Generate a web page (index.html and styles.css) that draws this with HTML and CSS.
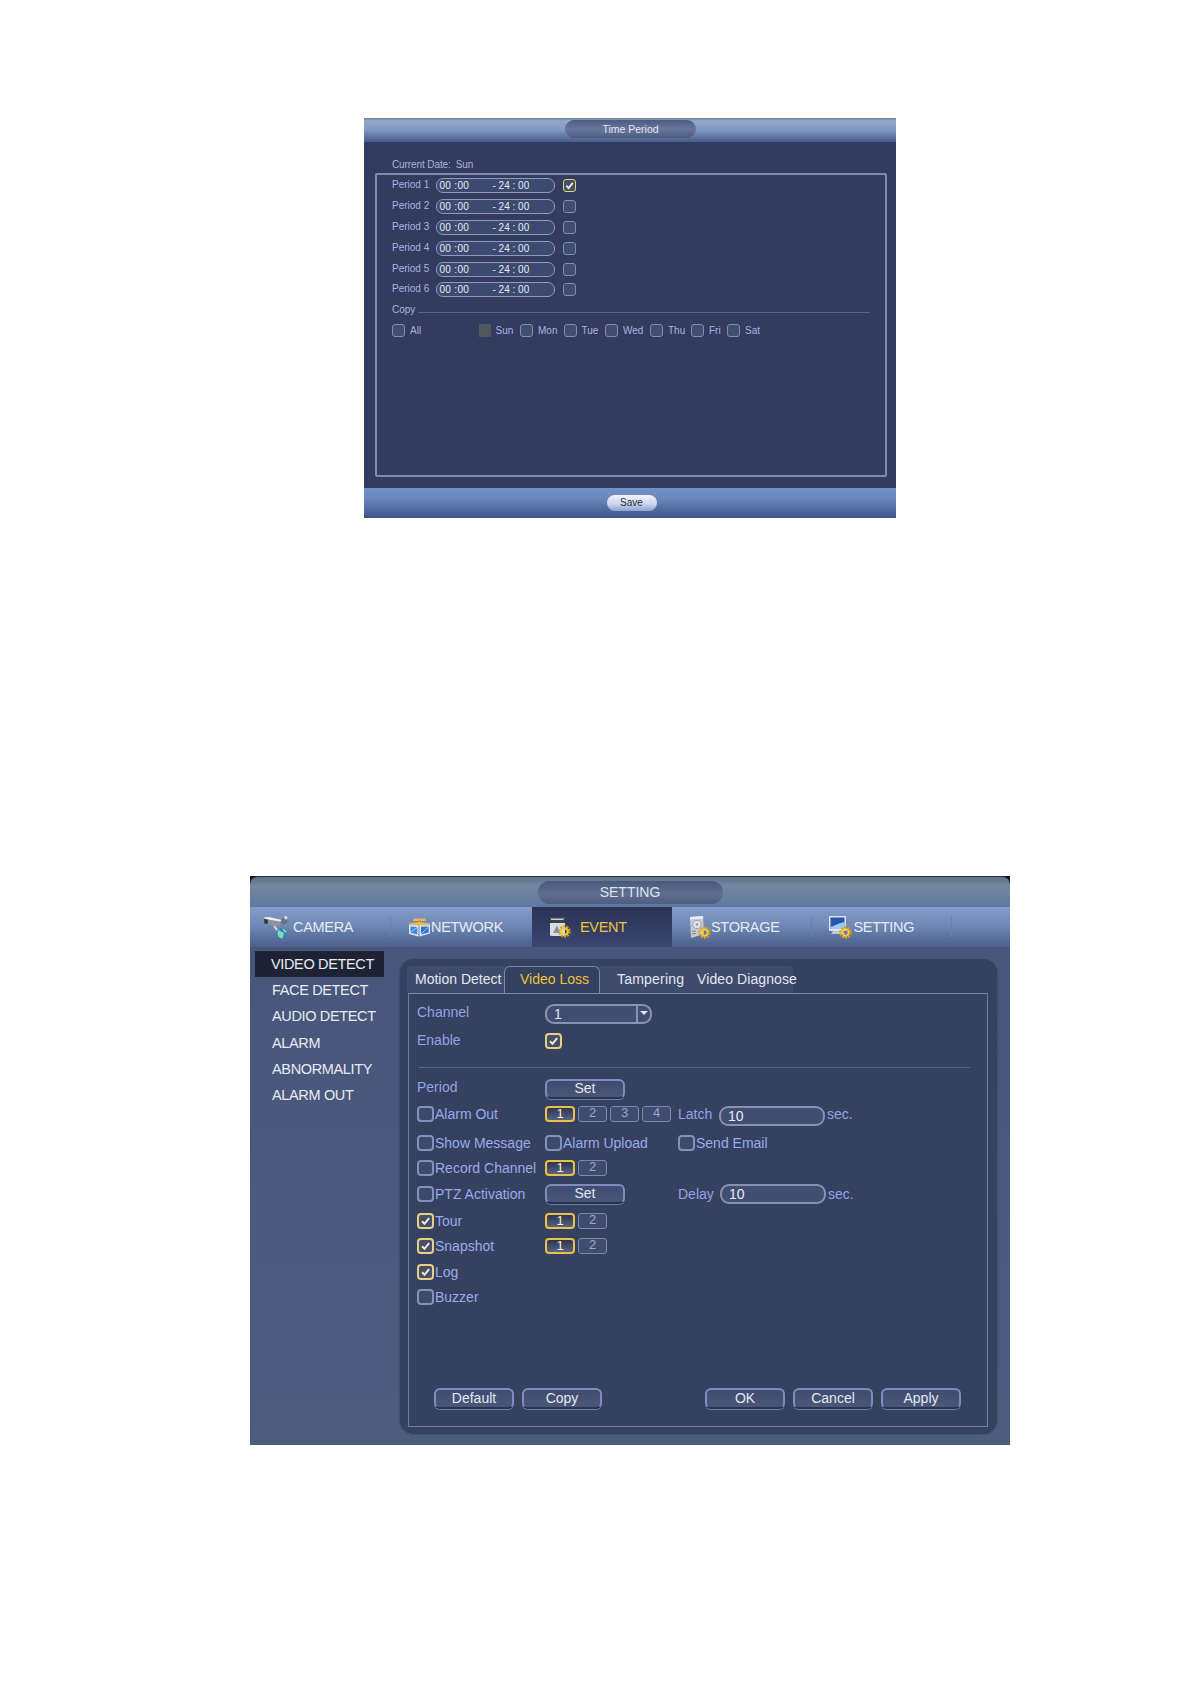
FILE: index.html
```html
<!DOCTYPE html>
<html lang="en">
<head>
<meta charset="utf-8">
<title>Time Period and Video Loss settings</title>
<link rel="stylesheet" href="styles.css">
</head>
<body>
<section class="period-win">
  <header class="pw-head"><div class="pw-pill">Time Period</div></header>
  <div class="pw-body">
    <div class="pw-date"><span>Current Date:</span><span>Sun</span></div>
    <div class="pw-box">
      <div class="pw-row"><span class="pw-label">Period 1</span><div class="pw-input"><span>00 :00</span><span>- 24 : 00</span></div><span class="cb sm on"><svg viewBox="0 0 12 12"><path d="M2.500 6.200 5 8.800 9.600 3.200"/></svg></span></div>
      <div class="pw-row"><span class="pw-label">Period 2</span><div class="pw-input"><span>00 :00</span><span>- 24 : 00</span></div><span class="cb sm"></span></div>
      <div class="pw-row"><span class="pw-label">Period 3</span><div class="pw-input"><span>00 :00</span><span>- 24 : 00</span></div><span class="cb sm"></span></div>
      <div class="pw-row"><span class="pw-label">Period 4</span><div class="pw-input"><span>00 :00</span><span>- 24 : 00</span></div><span class="cb sm"></span></div>
      <div class="pw-row"><span class="pw-label">Period 5</span><div class="pw-input"><span>00 :00</span><span>- 24 : 00</span></div><span class="cb sm"></span></div>
      <div class="pw-row"><span class="pw-label">Period 6</span><div class="pw-input"><span>00 :00</span><span>- 24 : 00</span></div><span class="cb sm"></span></div>
      <div class="pw-copy"><span>Copy</span><i></i></div>
      <div class="pw-days">
        <span class="day"><span class="cb sm"></span>All</span>
        <span class="day"><span class="cb sm off"></span>Sun</span>
        <span class="day"><span class="cb sm"></span>Mon</span>
        <span class="day"><span class="cb sm"></span>Tue</span>
        <span class="day"><span class="cb sm"></span>Wed</span>
        <span class="day"><span class="cb sm"></span>Thu</span>
        <span class="day"><span class="cb sm"></span>Fri</span>
        <span class="day"><span class="cb sm"></span>Sat</span>
      </div>
    </div>
  </div>
  <footer class="pw-foot"><button class="pw-save">Save</button></footer>
</section>

<section class="set-win">
  <header class="sw-title"><div class="sw-pill">SETTING</div></header>
  <nav class="sw-tabs">
    <div class="tab t-camera">
      <svg class="ico" width="25" height="26" viewBox="0 0 25 26"><path d="M1 4 17 7 16 13 3 10Z" fill="#8d929c"/><path d="M1 3.500 6 3 19 6 17 7.500 2 5Z" fill="#eceef2"/><path d="M1 5 5 5.500 4.500 10 1.500 9.500Z" fill="#2f333c"/><path d="M18 5 23 3 24.500 4 24 9 19 11Z" fill="#6c717c"/><path d="M21 2.500 24 2 24.500 5 22 5.500Z" fill="#dfe2e8"/><path d="M11 12 15 17" stroke="#c9ccd3" stroke-width="2.200"/><circle cx="18.500" cy="19.500" r="5.500" fill="#2a86b2"/><path d="M15 16c2 0 2.500 2 4.500 2s1 4 0 6.500c-2.500 0-5-2.500-5-5zM19.500 14.500c2 .5 4 2 4.300 4-2 .5-3.500-1-4.300-4Z" fill="#86d6b4"/></svg>
      <span>CAMERA</span>
    </div>
    <div class="tab t-network">
      <svg class="ico" width="23" height="20" viewBox="0 0 23 20"><path d="M6 1.500h11l1 2.500H5Z" fill="#e8b84a"/><path d="M10.500 3.500h2V7h-2Z" fill="#c98f2c"/><path d="M1 6.500 11 5 22 6.500 22 8 11 9 1 8Z" fill="#eeb84c"/><path d="M1 8 10.500 8.500V19.500L1 17Z" fill="#dfe7f3"/><path d="M2.500 9.500 9.300 10V17.500L2.500 15.800Z" fill="#3d8bdc"/><path d="M11.500 8.500 22 8V16.500L11.500 19.500Z" fill="#dfe7f3"/><path d="M13 9.800 20.700 9.400V15.600L13 17.500Z" fill="#2d74cf"/><path d="M13 17 20.500 10M2.800 15 9 10.500" stroke="#a8d2f5" stroke-width="1"/></svg>
      <span>NETWORK</span>
    </div>
    <div class="tab t-event active">
      <svg class="ico" width="22" height="22" viewBox="0 0 22 22"><rect x="1" y="1" width="15" height="19" rx="1.500" fill="#d8dce4"/><path d="M1 2.500Q1 1 2.500 1H14.500Q16 1 16 2.500V7H1Z" fill="#3f434c"/><path d="M2 3.200H14.500" stroke="#eef0f4" stroke-width="1.200"/><path d="M4 17 8 9.500 11 17Z" fill="#7f90a8"/><circle cx="15.500" cy="15.500" r="5" fill="none" stroke="#d9a010" stroke-width="2.400" stroke-dasharray="2 1.100"/><circle cx="15.500" cy="15.500" r="3.200" fill="none" stroke="#f4cc3a" stroke-width="2"/></svg>
      <span>EVENT</span>
    </div>
    <div class="tab t-storage">
      <svg class="ico" width="22" height="24" viewBox="0 0 22 24"><path d="M1 2 14 1 15 19 2 23Z" fill="#c6cad3"/><path d="M1 2 14 1 14.200 3.500 1 4.500Z" fill="#eceef2"/><circle cx="8" cy="9.500" r="4.200" fill="#dfe2e8" stroke="#9aa1ae"/><circle cx="8" cy="9.500" r="1.300" fill="#8f96a4"/><path d="M3 16.500 7 16M3 19 7 18.500" stroke="#7b818d"/><circle cx="15.500" cy="17.500" r="5" fill="none" stroke="#d9a010" stroke-width="2.400" stroke-dasharray="2 1.100"/><circle cx="15.500" cy="17.500" r="3.200" fill="none" stroke="#f4cc3a" stroke-width="2"/></svg>
      <span>STORAGE</span>
    </div>
    <div class="tab t-setting">
      <svg class="ico" width="24" height="24" viewBox="0 0 24 24"><rect x="1" y="1" width="17" height="15" rx="1" fill="#dfe4ec"/><rect x="2.500" y="2.500" width="14" height="11.500" fill="#2558ac"/><path d="M2.500 12c4-1 8-4 14-5v7h-14Z" fill="#9ccbf2"/><path d="M5 16h9l3 3H3Z" fill="#c3c8d1"/><circle cx="17.500" cy="17.500" r="5" fill="none" stroke="#d9a010" stroke-width="2.400" stroke-dasharray="2 1.100"/><circle cx="17.500" cy="17.500" r="3.200" fill="none" stroke="#f4cc3a" stroke-width="2"/></svg>
      <span>SETTING</span>
    </div>
  </nav>
  <div class="sw-main">
    <aside class="side">
      <div class="side-item sel">VIDEO DETECT</div>
      <div class="side-item">FACE DETECT</div>
      <div class="side-item">AUDIO DETECT</div>
      <div class="side-item">ALARM</div>
      <div class="side-item">ABNORMALITY</div>
      <div class="side-item">ALARM OUT</div>
    </aside>
    <main class="content">
      <div class="subtabs">
        <span class="st st-motion">Motion Detect</span>
        <span class="st st-loss">Video Loss</span>
        <span class="st st-tamper">Tampering</span>
        <span class="st st-diag">Video Diagnose</span>
      </div>
      <div class="box">
        <div class="form">
          <span class="lbl up2">Channel</span>
          <div class="combo"><span>1</span><i class="arrow"></i></div>
          <span></span>

          <span class="lbl up1">Enable</span>
          <span class="cb on"><svg viewBox="0 0 12 12"><path d="M2.500 6.200 5 8.800 9.600 3.200"/></svg></span>
          <span></span>

          <hr class="rule">

          <span class="lbl up2">Period</span>
          <button class="btn set">Set</button>
          <span></span>

          <label class="chk"><span class="cb"></span>Alarm Out</label>
          <div class="nums"><span class="num on">1</span><span class="num">2</span><span class="num">3</span><span class="num">4</span></div>
          <div class="extra"><span class="lbl x-lbl">Latch</span><span class="field"><span>10</span></span><span class="lbl unit">sec.</span></div>

          <label class="chk"><span class="cb"></span>Show Message</label>
          <label class="chk"><span class="cb"></span>Alarm Upload</label>
          <label class="chk"><span class="cb"></span>Send Email</label>

          <label class="chk"><span class="cb"></span>Record Channel</label>
          <div class="nums"><span class="num on">1</span><span class="num">2</span></div>
          <span></span>

          <label class="chk"><span class="cb"></span>PTZ Activation</label>
          <button class="btn set">Set</button>
          <div class="extra"><span class="lbl x-lbl">Delay</span><span class="field f2"><span>10</span></span><span class="lbl unit">sec.</span></div>

          <label class="chk"><span class="cb on"><svg viewBox="0 0 12 12"><path d="M2.500 6.200 5 8.800 9.600 3.200"/></svg></span>Tour</label>
          <div class="nums"><span class="num on">1</span><span class="num">2</span></div>
          <span></span>

          <label class="chk"><span class="cb on"><svg viewBox="0 0 12 12"><path d="M2.500 6.200 5 8.800 9.600 3.200"/></svg></span>Snapshot</label>
          <div class="nums"><span class="num on">1</span><span class="num">2</span></div>
          <span></span>

          <label class="chk"><span class="cb on"><svg viewBox="0 0 12 12"><path d="M2.500 6.200 5 8.800 9.600 3.200"/></svg></span>Log</label>
          <span></span>
          <span></span>

          <label class="chk"><span class="cb"></span>Buzzer</label>
          <span></span>
          <span></span>
        </div>
        <div class="actions">
          <div class="act-group"><button class="btn act">Default</button><button class="btn act">Copy</button></div>
          <div class="act-group"><button class="btn act">OK</button><button class="btn act">Cancel</button><button class="btn act">Apply</button></div>
        </div>
      </div>
    </main>
  </div>
</section>
</body>
</html>
```
FILE: styles.css
```css
* { box-sizing: border-box; }
html, body { margin: 0; padding: 0; background: #fff; }
body {
  width: 1191px;
  height: 1684px;
  overflow: hidden;
  font-family: "Liberation Sans", Arial, sans-serif;
  display: flex;
  flex-direction: column;
}

/* ---------- shared checkbox ---------- */
.cb {
  flex: none;
  display: inline-block;
  width: 17px;
  height: 16px;
  border: 2px solid #8492bb;
  border-radius: 4px;
  background: #3d4a6c;
}
.cb svg { display: block; width: 100%; height: 100%; fill: none; stroke: #f2ead0; stroke-width: 2; }
.cb.on { border-color: #e5d083; background: #454f68; }
.cb.sm { width: 13px; height: 13px; border-width: 1.500px; border-radius: 3px; border-color: #7f8cb4; background: #414e72; }
.cb.sm.on { border-color: #dcd77c; background: #46506c; }
.cb.sm.off { border: 0; border-radius: 0; background: #50555f; width: 12px; }

/* ---------- Time Period window ---------- */
.period-win {
  flex: none;
  width: 532px;
  height: 400px;
  margin: 118px 0 0 364px;
  display: flex;
  flex-direction: column;
  background: #333b5e;
}
.pw-head {
  flex: none;
  height: 24px;
  display: flex;
  justify-content: center;
  padding: 2px 0 0 0;
  background: linear-gradient(#6f8099 0, #93a9cc 12%, #7f98c2 50%, #465c8a 100%);
}
.pw-pill {
  width: 131px;
  height: 18px;
  margin-left: 1px;
  border-radius: 9px;
  background: linear-gradient(#4e5c80, #67779b 50%, #4d5b80);
  color: #e3e7f2;
  font-size: 10.500px;
  line-height: 18px;
  text-align: center;
}
.pw-body { flex: 1; padding: 0 9px 0 11px; display: flex; flex-direction: column; }
.pw-date {
  height: 31px;
  padding: 16px 0 0 17px;
  display: flex;
  gap: 5px;
  font-size: 10px;
  letter-spacing: -.1px;
  line-height: 14px;
  color: #a9b5dc;
}
.pw-box {
  height: 304px;
  border: 2px solid #7f8ab3;
  border-radius: 2px;
  padding: .500px 0 0 15px;
}
.pw-row { height: 20.800px; display: flex; align-items: center; }
.pw-label { width: 44px; font-size: 10px; color: #a7b5e4; margin-bottom: 2px; }
.pw-input {
  width: 119px;
  height: 15px;
  display: flex;
  padding: 0 0 0 2.500px;
  border: 1.500px solid #8d99bf;
  border-radius: 7px;
  background: #3d4a70;
  color: #e8ebf4;
  font-size: 10px;
  line-height: 13px;
}
.pw-input span:first-child { width: 53px; letter-spacing: .3px; }
.pw-row .cb { margin-left: 8px; }
.pw-copy { height: 19px; display: flex; align-items: center; gap: 3px; font-size: 10px; color: #a7b5e4; padding-right: 15px; }
.pw-copy i { flex: 1; height: 1px; background: #59648a; margin-top: 6px; }
.pw-days {
  display: grid;
  grid-template-columns: 86.500px 41.500px 43.500px 41.500px 45px 41px 36px auto;
  margin-top: 5px;
}
.day { display: flex; align-items: center; gap: 5px; font-size: 10px; color: #a7b5e4; }
.pw-foot {
  flex: none;
  height: 30px;
  display: flex;
  justify-content: center;
  padding-top: 7px;
  background: linear-gradient(#7491c5, #6a86bb 35%, #3c5488);
}
.pw-save {
  width: 50px;
  height: 16px;
  margin-left: 3px;
  padding: 0;
  border: 0;
  border-radius: 8px;
  background: linear-gradient(#f2f5fa, #cdd8ec 55%, #8aa0cf);
  color: #262c44;
  font: 10px/16px "Liberation Sans", Arial, sans-serif;
}

/* ---------- Setting window ---------- */
.set-win {
  flex: none;
  width: 760px;
  height: 569px;
  margin: 358px 0 0 250px;
  display: flex;
  flex-direction: column;
  background: linear-gradient(#14161f 0 8px, #4a5a7d 8px);
  color: #e6e9f2;
}
.sw-title {
  flex: none;
  height: 31px;
  display: flex;
  justify-content: center;
  padding-top: 4px;
  border-top: 1px solid #2b3040;
  border-radius: 8px 8px 0 0;
  background: linear-gradient(#5e6f90, #74879f 30%, #5f77a1 100%);
}
.sw-pill {
  width: 185px;
  height: 23px;
  border-radius: 12px;
  background: linear-gradient(#49597a, #5f6f91 55%, #4e5e80);
  color: #dfe3ee;
  font-size: 14px;
  line-height: 23px;
  text-align: center;
}
.sw-tabs {
  flex: none;
  height: 40px;
  display: grid;
  grid-template-columns: 141px 141px 140px 139.500px 140.500px 58px;
  background: linear-gradient(#839cc9, #6f89b8 45%, #4b5f89);
  font-size: 14.500px;
  letter-spacing: -.3px;
}
.tab { display: flex; align-items: center; position: relative; height: 40px; color: #e8ebf2; }
.tab::after { content: ""; position: absolute; right: 0; top: 10px; width: 1px; height: 20px; background: #6a80a8; }
.tab .ico { flex: none; }
.t-camera { padding-left: 13px; gap: 5px; }
.t-network { padding-left: 17px; gap: 0; }
.t-network::after, .t-event::after { display: none; }
.t-event { padding-left: 17px; gap: 9px; color: #f0c23e; }
.t-event.active { background: linear-gradient(#2b3354, #3a4770); }
.t-storage { padding-left: 17px; gap: 0; }
.t-setting { padding-left: 16px; gap: 2px; }
.sw-main { flex: 1; display: flex; background: linear-gradient(#47567a, #4d5d80); }
.side { width: 150px; flex: none; padding: 4px 0 0 5px; font-size: 14.500px; letter-spacing: -.35px; color: #e8ebf2; }
.side-item { height: 26.200px; line-height: 26px; padding-left: 17px; }
.side-item.sel { width: 129px; background: #1d2335; padding-left: 16px; }
.content {
  flex: none;
  width: 597px;
  height: 474px;
  margin-top: 12px;
  padding: 7px 9px 6px 7px;
  border-radius: 14px;
  background: #35415e;
  box-shadow: 0 1px 2px #2c3550;
  display: flex;
  flex-direction: column;
}
.subtabs {
  flex: none;
  width: 386px;
  height: 27px;
  padding-bottom: 2px;
  display: flex;
  align-items: center;
  font-size: 14px;
  color: #e4e7f0;
  background: #3f4b6c;
  border-radius: 4px 4px 0 0;
}
.st { flex: none; }
.st-motion { margin-left: 8px; width: 89px; }
.st-loss {
  align-self: flex-start;
  width: 96px;
  height: 27px;
  line-height: 25px;
  padding-left: 15px;
  color: #f0c23e;
  background: #35415e;
  border: 1.500px solid #7a88ab;
  border-bottom: 0;
  border-radius: 6px 6px 0 0;
}
.st-tamper { margin-left: 17px; width: 80px; letter-spacing: .2px; }
.st-diag { width: 102px; letter-spacing: .1px; }
.box {
  flex: 1;
  margin-left: 1px;
  border: 1.500px solid #6f7da3;
  border-top-color: #7a88ab;
  display: flex;
  flex-direction: column;
  padding: 7px 26px 17px 25px;
}
.form {
  flex: 1;
  margin-left: -17px;
  display: grid;
  grid-template-columns: 128px 133px 1fr;
  grid-template-rows: 26px 27px 24px 22px 28px 29px 22px 30px 24px 26px 25px 26px;
  align-items: center;
  font-size: 14px;
}
.lbl { color: #93a3e4; }
.up2 { margin-bottom: 4px; }
.up1 { margin-bottom: 2px; }
.rule { grid-column: 1 / -1; width: 551px; height: 1px; margin: 2px 0 0 2px; border: 0; background: #57648a; }
.chk { display: flex; align-items: center; gap: 1px; color: #9aaaec; white-space: nowrap; }
.combo {
  width: 107px;
  height: 20px;
  display: flex;
  justify-content: space-between;
  padding-left: 7px;
  border: 2px solid #8592b6;
  border-radius: 9px;
  background: #414e72;
  color: #dde2ee;
  line-height: 16px;
}
.arrow {
  width: 14px;
  border-left: 2px solid #8592b6;
  position: relative;
}
.arrow::after {
  content: "";
  position: absolute;
  left: 2px;
  top: 5px;
  border: 4px solid transparent;
  border-top: 4px solid #dde2ee;
  border-bottom: 0;
}
.btn {
  padding: 0 0 2px;
  border: 2px solid #7e8cc0;
  border-bottom: 2px solid #2c3350;
  border-radius: 6px;
  background: linear-gradient(#3f4c70, #4a5778);
  color: #e3e7f2;
  font: 14px/1 "Liberation Sans", Arial, sans-serif;
  box-shadow: 0 1px 0 #6f7cab;
}
.set { width: 80px; height: 20px; }
.act { width: 80px; height: 21px; }
.nums { display: flex; gap: 3px; }
.num {
  width: 29px;
  height: 16px;
  border: 1.500px solid #7b89af;
  border-radius: 3px;
  background: #3f4c70;
  color: #9aa8d4;
  font-size: 13px;
  line-height: 12px;
  text-align: center;
}
.num.on {
  width: 30px;
  border: 2px solid #e8c04a;
  border-radius: 4px;
  background: linear-gradient(#2d3650, #566281);
  color: #f2f0dc;
  line-height: 11px;
}
.extra { display: flex; align-items: center; }
.x-lbl { width: 41px; }
.field {
  width: 106px;
  height: 20px;
  padding-left: 7px;
  border: 2px solid #8592b6;
  border-radius: 9px;
  background: #414e72;
  color: #e8ebf4;
  line-height: 17px;
  position: relative;
  top: 2px;
}
.f2 { margin-left: 1px; top: 0; }
.unit { margin-left: 2px; }
.actions { flex: none; display: flex; justify-content: space-between; }
.act-group { display: flex; gap: 8px; }
```
